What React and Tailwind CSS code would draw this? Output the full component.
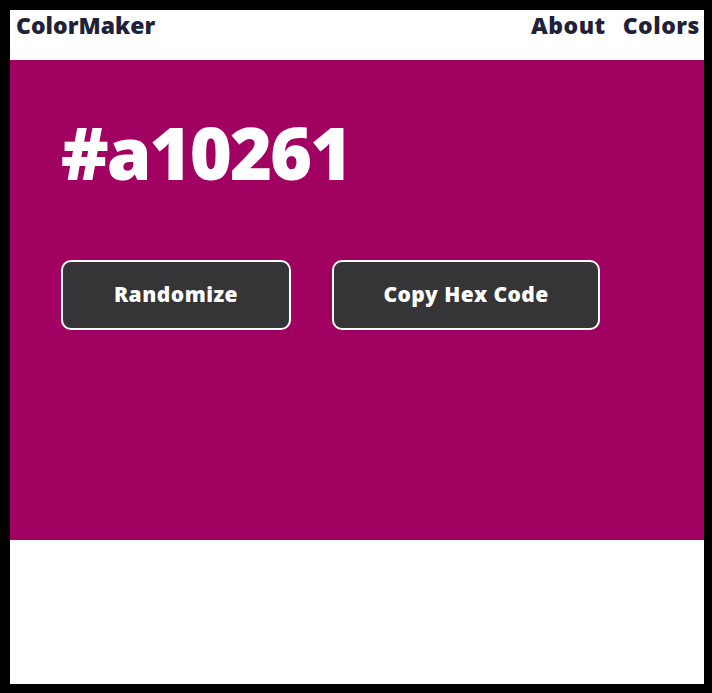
import React, { useState } from 'react';

const randomHex = () =>
  '#' + Math.floor(Math.random() * 0xffffff).toString(16).padStart(6, '0');

// Single page color picker
const App = () => {
  const [color, setColor] = useState('#a10261');

  const copyHex = () => {
    if (navigator.clipboard) navigator.clipboard.writeText(color).catch(() => {});
  };

  return (
    <div
      className="h-[693px] w-[712px] bg-white border-black border-l-[10px] border-t-[10px] border-r-8 border-b-[9px] flex flex-col overflow-hidden"
      style={{ fontFamily: '"Open Sans", "Noto Sans", sans-serif' }}
    >
      {/* Header */}
      <header className="h-[50px] flex items-start justify-between pl-[6px] pr-[4px] text-[#221f38]">
        <span className="text-[23px] font-extrabold leading-none mt-[4px]">ColorMaker</span>
        <nav className="flex gap-[17px] mt-[4px]">
          <a href="#" className="text-[23px] font-extrabold leading-none tracking-[0.5px]">About</a>
          <a href="#" className="text-[23px] font-extrabold leading-none tracking-[0.5px]">Colors</a>
        </nav>
      </header>

      {/* Color panel */}
      <main className="h-[480px] pl-[51px] pt-[56px]" style={{ backgroundColor: color }}>
        <h1 className="text-[72px] font-extrabold leading-none text-white tracking-[-2px]">{color}</h1>
        <div className="flex gap-[41px] mt-[72px]">
          <button
            type="button"
            onClick={() => setColor(randomHex())}
            className="w-[230px] h-[70px] rounded-[10px] border-2 border-white bg-[#353537] text-white text-[21px] font-extrabold tracking-[0.5px]"
          >
            Randomize
          </button>
          <button
            type="button"
            onClick={copyHex}
            className="w-[268px] h-[70px] rounded-[10px] border-2 border-white bg-[#353537] text-white text-[21px] font-extrabold tracking-[0.4px]"
          >
            Copy Hex Code
          </button>
        </div>
      </main>
    </div>
  );
};

export default App;
